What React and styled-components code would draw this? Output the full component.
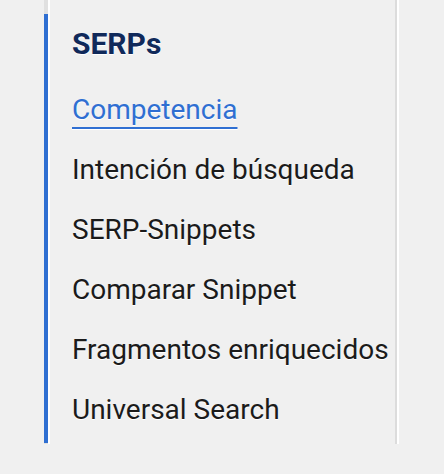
import React from "react";
import styled, { createGlobalStyle } from "styled-components";

const GlobalStyle = createGlobalStyle`
  body {
    margin: 0;
    background: #f0f0f0;
    font-family: Roboto, "Liberation Sans", sans-serif;
  }
`;

const Page = styled.div`
  padding-left: 44px;
`;

const Sidebar = styled.aside`
  box-sizing: border-box;
  width: 353px;
  height: 444px;
  border-left: 4px solid #e0e0e0;
  border-right: 2px solid #dcdcdc;
  box-shadow: inset 2px 0 0 #fff, 2px 0 0 #fff;
  padding-top: 14px;
`;

const Section = styled.nav`
  margin-left: -4px;
  border-left: 4px solid #2f6fd2;
  padding: 10px 0 3px 24px;
`;

const Heading = styled.h3`
  margin: 0 0 16px;
  font-size: 30px;
  line-height: 40px;
  font-weight: 700;
  color: #10295a;
  text-shadow: 0 1px 0 #fff;
`;

const List = styled.ul`
  list-style: none;
  margin: 0;
  padding: 0;
`;

const Item = styled.li`
  font-size: 28px;
  line-height: 60px;
  white-space: nowrap;
  text-shadow: 0 1px 0 #fff;
`;

const Link = styled.a`
  color: ${(p) => (p.$active ? "#2f6fd2" : "#1b1b1b")};
  text-decoration: ${(p) => (p.$active ? "underline" : "none")};
  text-decoration-thickness: 2px;
  text-underline-offset: 8px;
`;

const items = [
  "Competencia",
  "Intención de búsqueda",
  "SERP-Snippets",
  "Comparar Snippet",
  "Fragmentos enriquecidos",
  "Universal Search",
];

const App = () => {
  return (
    <>
      <GlobalStyle />
      <Page>
        <Sidebar>
          <Section>
            <Heading>SERPs</Heading>
            <List>
              {items.map((label, i) => (
                <Item key={label}>
                  <Link href="#" $active={i === 0}>
                    {label}
                  </Link>
                </Item>
              ))}
            </List>
          </Section>
        </Sidebar>
      </Page>
    </>
  );
};

export default App;
